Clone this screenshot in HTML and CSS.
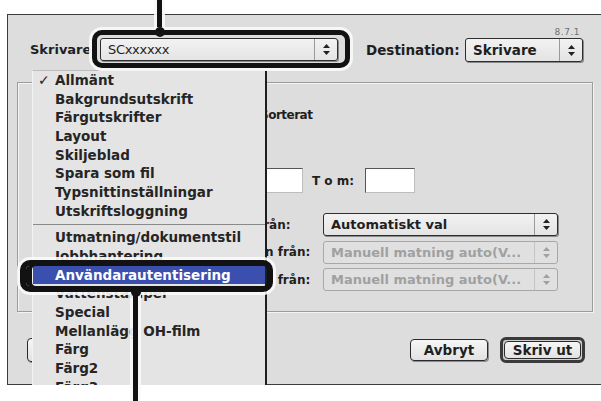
FILE: index.html
```html
<!DOCTYPE html>
<html lang="sv">
<head>
<meta charset="utf-8">
<title>Skriv ut</title>
<link rel="stylesheet" href="styles.css">
</head>
<body>
<div class="stage">
  <div class="window">
    <div class="toprow">
      <div class="printer-part">
        <span class="label printer-label">Skrivare:</span>
        <div class="popup printer-pop">
          <span class="val thin">SCxxxxxx</span>
          <span class="arrows"><svg width="7" height="11" viewBox="0 0 7 11"><path d="M3.5 0 L7 4 L0 4 Z M3.5 11 L7 7 L0 7 Z" fill="#222"/></svg></span>
        </div>
      </div>
      <div class="dest-part">
        <div class="version">8.7.1</div>
        <div class="dest-row">
          <span class="label dest-label">Destination:</span>
          <div class="popup dest-pop">
            <span class="val">Skrivare</span>
            <span class="arrows"><svg width="7" height="11" viewBox="0 0 7 11"><path d="M3.5 0 L7 4 L0 4 Z M3.5 11 L7 7 L0 7 Z" fill="#222"/></svg></span>
          </div>
        </div>
      </div>
    </div>

    <div class="group">
      <div class="row copies">
        <span class="rlabel"></span>
        <span class="field small"></span>
        <span class="check"></span>
        <span class="text sorted">Sorterat</span>
      </div>
      <div class="row pages">
        <span class="rlabel"></span>
        <span class="radios"><span class="radio"></span><span class="radio"></span></span>
        <span class="field from"></span>
        <span class="tom">T o m:</span>
        <span class="field to"></span>
      </div>
      <div class="sources">
        <div class="srow">
          <span class="slabel">Alla sidor från:</span>
          <div class="popup wide">
            <span class="val">Automatiskt val</span>
            <span class="arrows"><svg width="7" height="11" viewBox="0 0 7 11"><path d="M3.5 0 L7 4 L0 4 Z M3.5 11 L7 7 L0 7 Z" fill="#222"/></svg></span>
          </div>
        </div>
        <div class="srow">
          <span class="slabel">Första sidan från:</span>
          <div class="popup wide disabled">
            <span class="val">Manuell matning auto(V...</span>
            <span class="arrows"><svg width="7" height="11" viewBox="0 0 7 11"><path d="M3.5 0 L7 4 L0 4 Z M3.5 11 L7 7 L0 7 Z" fill="#a0a0a0"/></svg></span>
          </div>
        </div>
        <div class="srow">
          <span class="slabel">Återstående från:</span>
          <div class="popup wide disabled">
            <span class="val">Manuell matning auto(V...</span>
            <span class="arrows"><svg width="7" height="11" viewBox="0 0 7 11"><path d="M3.5 0 L7 4 L0 4 Z M3.5 11 L7 7 L0 7 Z" fill="#a0a0a0"/></svg></span>
          </div>
        </div>
      </div>
    </div>

    <div class="buttons">
      <span class="btn save"></span>
      <span class="btn cancel">Avbryt</span>
      <span class="default-ring"><span class="btn ok">Skriv ut</span></span>
    </div>
  </div>

  <div class="menu">
    <div class="item"><span class="mark">✓</span>Allmänt</div>
    <div class="item"><span class="mark"></span>Bakgrundsutskrift</div>
    <div class="item"><span class="mark"></span>Färgutskrifter</div>
    <div class="item"><span class="mark"></span>Layout</div>
    <div class="item"><span class="mark"></span>Skiljeblad</div>
    <div class="item"><span class="mark"></span>Spara som fil</div>
    <div class="item"><span class="mark"></span>Typsnittinställningar</div>
    <div class="item"><span class="mark"></span>Utskriftsloggning</div>
    <div class="sep"></div>
    <div class="item"><span class="mark"></span>Utmatning/dokumentstil</div>
    <div class="item"><span class="mark"></span>Jobbhantering</div>
    <div class="item selected"><span class="mark"></span>Användarautentisering</div>
    <div class="item"><span class="mark"></span>Vattenstämpel</div>
    <div class="item"><span class="mark"></span>Special</div>
    <div class="item"><span class="mark"></span>Mellanlägg OH-film</div>
    <div class="item"><span class="mark"></span>Färg</div>
    <div class="item"><span class="mark"></span>Färg2</div>
    <div class="item"><span class="mark"></span>Färg3</div>
  </div>

  <div class="leader leader-top"></div>
  <div class="callout callout-top"></div>
  <div class="dot dot-top"></div>

  <div class="leader leader-bottom"></div>
  <div class="callout callout-bottom"></div>
  <div class="dot dot-bottom"></div>
</div>
</body>
</html>
```

FILE: styles.css
```css
html, body {
  margin: 0;
  padding: 0;
  background: #ffffff;
}

.stage {
  position: relative;
  width: 601px;
  height: 401px;
  overflow: hidden;
  box-sizing: border-box;
  padding: 14px 0 0 7px;
  background: #ffffff;
  font-family: "DejaVu Sans", "Liberation Sans", sans-serif;
  font-weight: bold;
  font-size: 13.5px;
  color: #1f1f1f;
}

/* window */
.window {
  width: 594px;
  height: 371px;
  box-sizing: border-box;
  border: 1px solid #3c3c3c;
  border-right: none;
  background: #dddddd;
  padding: 10px 0 0 9px;
}

.toprow {
  display: flex;
  align-items: flex-end;
  padding-left: 13px;
  height: 37px;
}

.printer-part {
  display: flex;
  align-items: center;
  margin-bottom: 1px;
}

.label {
  display: inline-block;
  white-space: nowrap;
}

.printer-label {
  width: 70px;
  font-size: 13px;
}

.dest-part {
  display: flex;
  flex-direction: column;
  align-items: flex-end;
  margin-left: 28px;
}

.version {
  font-weight: normal;
  font-size: 9px;
  line-height: 12px;
  color: #707070;
  padding-right: 3px;
  letter-spacing: 0.5px;
}

.dest-row {
  display: flex;
  align-items: center;
}

.dest-label {
  width: 93px;
  margin-right: 6px;
}

/* popups */
.popup {
  display: flex;
  align-items: stretch;
  box-sizing: border-box;
  height: 23px;
  border: 1px solid #2e2e2e;
  border-radius: 3px;
  background: linear-gradient(#f2f2f2, #e4e4e4);
  box-shadow: 1px 1px 0 #8a8a8a;
  font-size: 13px;
}

.popup .val {
  flex: 1;
  padding-left: 7px;
  line-height: 21px;
  white-space: nowrap;
  overflow: hidden;
}

.popup .val.thin {
  font-weight: normal;
  letter-spacing: -0.3px;
}

.popup .arrows {
  width: 22px;
  border-left: 1px solid #9a9a9a;
  display: flex;
  align-items: center;
  justify-content: center;
}

.printer-pop {
  width: 238px;
}

.dest-pop {
  width: 118px;
  height: 24px;
  font-size: 13.5px;
}

.dest-pop .val {
  line-height: 22px;
}

/* group box */
.group {
  margin-top: 20px;
  width: 576px;
  height: 230px;
  box-sizing: border-box;
  border: 1px solid #9c9c9c;
  box-shadow: inset 1px 1px 0 #f4f4f4, 1px 1px 0 #f4f4f4;
  padding: 20px 0 0 22px;
}

.row {
  display: flex;
  align-items: center;
  white-space: nowrap;
}

.copies {
  height: 24px;
}

.rlabel {
  width: 80px;
}

.field {
  display: inline-block;
  box-sizing: border-box;
  background: #ffffff;
  border: 1px solid #555555;
  border-right-color: #bdbdbd;
  border-bottom-color: #bdbdbd;
  height: 25px;
}

.field.small {
  width: 40px;
  margin-right: 80px;
}

.check {
  width: 13px;
  height: 13px;
  box-sizing: border-box;
  border: 1px solid #333;
  background: #fafafa;
  margin-right: 7px;
}

.sorted {
  font-size: 12px;
  letter-spacing: -0.5px;
}

.pages {
  margin-top: 41px;
  height: 25px;
}

.radios {
  width: 133px;
  display: flex;
  gap: 50px;
}

.radio {
  width: 12px;
  height: 12px;
  border-radius: 50%;
  border: 1px solid #333;
  background: #fafafa;
}

.field.from {
  width: 50px;
}

.tom {
  width: 44px;
  margin: 0 9px;
  font-size: 12px;
}

.field.to {
  width: 50px;
}

.sources {
  margin-top: 20px;
  display: flex;
  flex-direction: column;
  gap: 4.5px;
}

.srow {
  display: flex;
  align-items: center;
}

.slabel {
  width: 283px;
  padding-left: 150px;
  box-sizing: border-box;
  white-space: nowrap;
  overflow: hidden;
  font-size: 12px;
}

.popup.wide {
  width: 235px;
}

.popup.disabled {
  border-color: #a8a8a8;
  box-shadow: none;
  background: #e0e0e0;
  color: #a0a0a0;
}

.popup.disabled .arrows {
  border-left-color: #c4c4c4;
}

/* buttons */
.buttons {
  display: flex;
  align-items: center;
  margin-top: 25px;
  margin-left: 10px;
  width: 558px;
  height: 26px;
}

.btn {
  display: inline-block;
  box-sizing: border-box;
  height: 22px;
  line-height: 20px;
  border: 1px solid #2a2a2a;
  border-radius: 4px;
  background: linear-gradient(#f6f6f6, #e2e2e2);
  box-shadow: 1px 1px 0 #8c8c8c;
  text-align: center;
  white-space: nowrap;
}

.save {
  width: 140px;
  height: 24px;
  margin-right: auto;
}

.cancel {
  width: 78px;
  margin-right: 12px;
}

.default-ring {
  display: inline-flex;
  box-sizing: border-box;
  width: 85px;
  height: 26px;
  border: 3px solid #3a3a3a;
  border-radius: 6px;
  padding: 1px;
  background: #cfcfcf;
}

.ok {
  width: 100%;
  height: 18px;
  line-height: 16px;
  box-shadow: none;
}

/* pull-down menu */
.menu {
  position: absolute;
  left: 32px;
  top: 70px;
  width: 235px;
  height: 315px;
  box-sizing: border-box;
  overflow: hidden;
  background: #e4e4e4;
  border-top: 1px solid #bdbdbd;
  border-left: 1px solid #f2f2f2;
  border-right: 2px solid #1e1e1e;
}

.item {
  display: flex;
  align-items: center;
  height: 18.7px;
  line-height: 18.7px;
  white-space: nowrap;
  color: #252525;
}

.mark {
  display: inline-block;
  width: 17px;
  margin-left: 5px;
  font-size: 14px;
  text-align: left;
}

.item.selected {
  background: #3a4fae;
  color: #ffffff;
}

.sep {
  height: 7.8px;
  position: relative;
}

.sep::after {
  content: "";
  display: block;
  position: absolute;
  left: 0;
  right: 0;
  top: 3px;
  height: 1px;
  background: #8a8a8a;
}

/* callouts */
.callout {
  position: absolute;
  box-sizing: border-box;
  border-style: solid;
  border-color: #121212;
  border-radius: 10px;
}

.callout-top {
  left: 92px;
  top: 30px;
  width: 258px;
  height: 38px;
  border-width: 5px;
  box-shadow: 0 0 0 3px rgba(250, 250, 250, 0.9);
}

.callout-bottom {
  left: 20px;
  top: 260px;
  width: 253px;
  height: 32px;
  border-width: 6px;
  box-shadow: 0 0 0 3px rgba(250, 250, 250, 0.9), inset 6px 0 0 #121212;
}

.leader {
  position: absolute;
  width: 5px;
  background: #121212;
  box-shadow: 0 0 0 3px rgba(250, 250, 250, 0.9);
}

.leader-top {
  left: 157px;
  top: -4px;
  height: 35px;
}

.leader-bottom {
  left: 133px;
  top: 292px;
  height: 115px;
}

.dot {
  position: absolute;
  width: 10px;
  height: 10px;
  border-radius: 50%;
  background: #121212;
}

.dot-top {
  left: 154.5px;
  top: 27px;
}

.dot-bottom {
  left: 130.5px;
  top: 287px;
}
```
